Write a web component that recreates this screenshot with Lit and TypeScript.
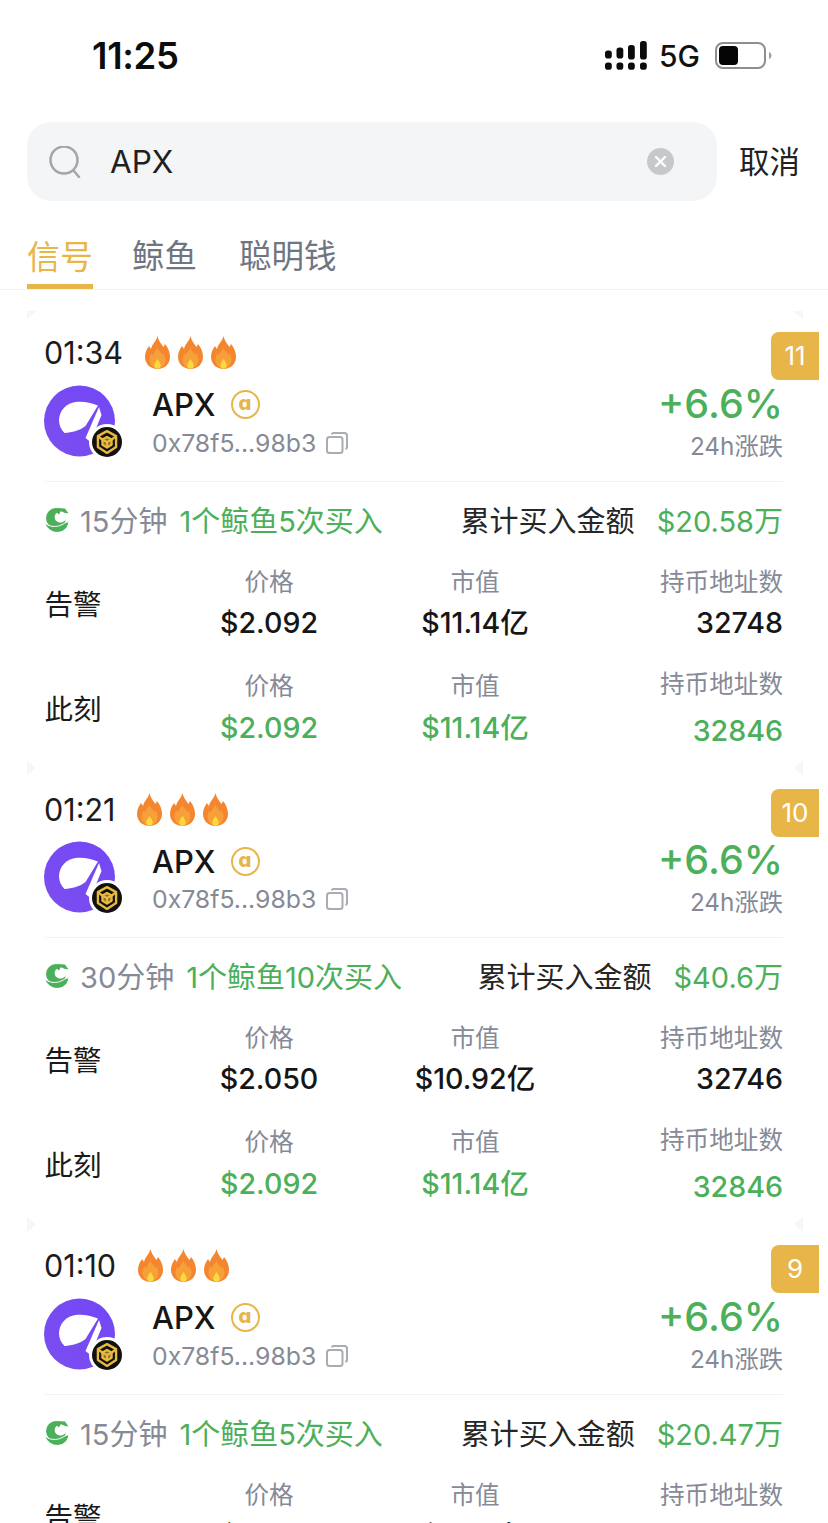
import { LitElement, html, css, svg } from "lit";
import { customElement } from "lit/decorators.js";

const flame = html`<svg class="flame" viewBox="0 0 25 33">
  <path fill="#f3862f" d="M12.5 0c1 5 3.5 7.5 6 11l1.500-3c3 3.500 5 8 5 13 0 7-5.500 12-12.500 12S0 28 0 21c0-5 2-8 4-11l2 3c1-5 5.500-8 6.500-13z"/>
  <path fill="#f7a03a" d="M12.500 12c1 3 4 5 5 7l1-1.500c1 1.500 2 4 2 6 0 5-3.500 8.500-8 8.500s-8-3.500-8-8.500c0-2.500 1-4.500 2-6l1.500 2c.5-3 3-5 4.500-7.500z"/>
  <path fill="#fbd93c" d="M12.500 23c1 1.500 3.200 4 3.200 6.500a3.200 3.200 0 0 1-6.400 0c0-2.500 2.200-5 3.200-6.500z"/>
</svg>`;

const avatar = html`<div class="avatar">
  <svg viewBox="0 0 71 72" width="71" height="72">
    <defs><linearGradient id="pg" x1="0" y1="1" x2="1" y2="0"><stop offset="0" stop-color="#7c4ff0"/><stop offset="1" stop-color="#7246f5"/></linearGradient></defs>
    <circle cx="35.500" cy="36" r="35.500" fill="url(#pg)"/>
    <path fill="#fff" d="M54 20.500C47 17.500 40 16.300 33 16.800 22 17.800 15 26 15 35.500 15 40 17 44.500 20.500 48 28 47.500 36 45.500 41.500 41z"/>
    <path fill="#fff" d="M55 22l2.500 8-11 27-5-4z"/>
  </svg>
  <div class="chain">
    <svg viewBox="0 0 33 33" width="30" height="30">
      <circle cx="16.500" cy="16.500" r="16.500" fill="#111"/>
      <g fill="none" stroke="#e8b93f" stroke-width="2.600" stroke-linejoin="round">
        <path d="M16.500 4.500l10 5.500v12l-10 6.500-10-6.500V10z"/>
        <path d="M16.500 11l5 2.800v5.700l-5 3-5-3v-5.700z" fill="#e8b93f" fill-opacity=".55"/>
        <path d="M16.500 16.500v6M11.500 14l5 2.500 5-2.500M6.500 10l5 4M26.500 10l-5 4"/>
      </g>
    </svg>
  </div>
</div>`;

const whale = html`<svg class="whale" viewBox="0 0 24 24" width="24" height="24">
  <circle cx="11" cy="10" r="10" fill="#4caf5a"/>
  <path fill="#4caf5a" d="M12 0l8 .5 3.500 5-6-1z"/>
  <path fill="#fff" d="M15.500 3.500c3.500 0 6 2.500 6 5.500 0 3.200-2.800 5.500-6 5.500-3.500 0-5.800-2.300-5.800-5.500 0-1.800 1-3.300 2.300-4.200l2 1.800z"/>
  <path fill="#4caf5a" stroke="#fff" stroke-width="1" d="M-.5 14.500c3 3.500 9.500 5 15 3.200 3.500-1.200 6.500-3.700 9.500-4.200-.5 4.500-3 8-6.500 9.800-3.500 1.500-7.500 1.500-10.500 0-3.500-1.800-6.500-5-7.500-8.800z"/>
</svg>`;

const copy = html`<svg class="copy" viewBox="0 0 22 22" width="22" height="22" fill="none" stroke="#a9acb3" stroke-width="2">
  <rect x="1" y="5" width="15.500" height="16" rx="2.500"/>
  <path d="M6 2.500C6 1.500 6.800 1 7.500 1H18.500C20 1 21 2 21 3.500V15c0 1-.7 1.800-1.700 1.800"/>
</svg>`;

interface Row { price: string; cap: string; holders: string; }
interface Card {
  time: string; badge: string; mins: string; whales: string; total: string;
  alert: Row; now: Row;
}
const now: Row = { price: "$2.092", cap: "$11.14亿", holders: "32846" };
const cards: Card[] = [
  { time: "01:34", badge: "11", mins: "15分钟", whales: "1个鲸鱼5次买入", total: "$20.58万", alert: { price: "$2.092", cap: "$11.14亿", holders: "32748" }, now },
  { time: "01:21", badge: "10", mins: "30分钟", whales: "1个鲸鱼10次买入", total: "$40.6万", alert: { price: "$2.050", cap: "$10.92亿", holders: "32746" }, now },
  { time: "01:10", badge: "9", mins: "15分钟", whales: "1个鲸鱼5次买入", total: "$20.47万", alert: { price: "$2.092", cap: "$11.14亿", holders: "32748" }, now },
];

@customElement("app-root")
export class AppRoot extends LitElement {
  static styles = css`
    :host {
      display: block; width: 828px; height: 1523px; overflow: hidden; background: #fff;
      font-family: "Inter", "Noto Sans CJK SC", sans-serif; color: #1a1a1a;
    }
    .status { height: 122px; display: flex; align-items: flex-start; justify-content: space-between; box-sizing: border-box; padding: 34px 56px 0 92px; }
    .clock { font-size: 36.500px; font-weight: 600; line-height: 44px; color: #0c0c0c; letter-spacing: -.3px; }
    .status-right { display: flex; align-items: center; height: 44px; margin-top: -1px; }
    .signal { display: block; margin-top: 1px; }
    .net { font-size: 30px; font-weight: 500; margin: 1px 15px 0 12px; line-height: 44px; color: #111; }
    .searchrow { display: flex; align-items: center; padding-left: 27px; }
    .search { width: 690px; height: 79px; border-radius: 24px; background: #f3f5f7; display: flex; align-items: center; box-sizing: border-box; padding: 0 43px 0 22px; }
    .q { font-size: 31.500px; margin-left: 29px; flex: 1; color: #1f1f1f; }
    .cancel { font-size: 30.500px; margin: -4px 0 0 22px; color: #222; }
    .tabs { margin-top: 32px; height: 56px; display: flex; padding-left: 27px; gap: 40px; border-bottom: 1px solid #f1f2f3; box-sizing: content-box; }
    .tab { font-size: 32.500px; line-height: 48px; color: #6f7581; height: 56px; box-sizing: border-box; }
    .tab.on { font-size: 33px; color: #e8b548; border-bottom: 5px solid #e8b548; margin-right: -1px; }
    .tab:last-child { margin-left: 2px; }
    .list { margin-top: 21px; overflow: hidden; padding-top: .5px; }
    .card { position: relative; height: 456.500px; box-sizing: border-box; padding: 21px 45px 0; }
    .mark { position: absolute; top: -8px; width: 9px; height: 16px; background: #f6f7f8; }
    .mark.l { left: 27px; clip-path: polygon(0 0, 100% 50%, 0 100%); }
    .mark.r { left: 794px; clip-path: polygon(100% 0, 0 50%, 100% 100%); }
    .rank { position: absolute; top: 20.500px; right: 9px; min-width: 48px; height: 48px; background: #e8b548; color: #fff; border-radius: 8px 0 0 8px; font-size: 26px; line-height: 48px; text-align: center; }
    .timerow { display: flex; align-items: center; height: 40px; }
    .time { font-size: 30.500px; color: #1c1c1c; margin-right: 22px; margin-left: -1px; }
    .flames { display: flex; gap: 8px; }
    .flame { width: 25px; height: 33px; display: block; }
    .head { display: flex; margin-top: 12px; height: 72px; }
    .avatar { position: relative; width: 71px; height: 72px; margin-left: -1px; flex: none; }
    .avatar > svg { display: block; }
    .chain { position: absolute; left: 48px; top: 42px; width: 30px; height: 30px; border-radius: 50%; background: #fff; box-shadow: 0 0 0 3px #fff; }
    .chain svg { display: block; }
    .info { margin-left: 37px; flex: 1; }
    .name { display: flex; align-items: center; height: 40px; font-size: 31px; font-weight: 500; color: #161616; }
    .at { width: 29px; height: 29px; box-sizing: border-box; border: 2.500px solid #e8b548; border-radius: 50%; margin-left: 15px; color: #e8b548; font-family: "DejaVu Sans", sans-serif; font-size: 19px; line-height: 22px; font-weight: 700; text-align: center; }
    .addr { display: flex; align-items: center; height: 36px; font-size: 24.800px; color: #868a96; }
    .copy { margin-left: 10px; }
    .chg { text-align: right; }
    .pct { font-size: 39.500px; font-weight: 500; color: #4caf5a; line-height: 40px; margin-top: -1px; }
    .chg-l { font-size: 24.300px; color: #868a96; line-height: 36px; margin-top: 4px; }
    .div { height: 1px; background: #f1f2f3; margin-top: 24px; }
    .whalerow { display: flex; align-items: center; height: 40px; margin-top: 17px; font-size: 29px; }
    .whale { flex: none; margin: 2px 11px 0 0; }
    .mins { color: #868a96; margin-right: 12px; }
    .gr { color: #4caf5a; }
    .sp { flex: 1; }
    .tot { color: #262626; margin-right: 22px; }
    .stats { display: grid; grid-template-columns: 120px 208px 204px 206px; grid-auto-rows: 104px; margin-top: 28px; }
    .rowlabel { font-size: 28.500px; line-height: 40px; height: 74px; display: flex; align-items: center; box-sizing: border-box; padding-top: 2px; margin-left: -.5px; }
    .rowlabel.live { padding-top: 4px; }
    .cell { display: flex; flex-direction: column; align-items: center; height: 74px; }
    .cell.end { align-items: flex-end; }
    .k { font-size: 24.600px; line-height: 30px; color: #868a96; }
    .v { font-size: 28.600px; font-weight: 500; line-height: 36px; margin-top: 8px; color: #161616; }
    .v.live { color: #4caf5a; margin-top: 9px; }
    .cell.drift { margin-top: -2px; }
    .cell.drift .v { margin-top: 14px; }
  `;

  private stat(label: string, r: Row, live: boolean) {
    return html`
      <div class="rowlabel ${live ? "live" : ""}">${label}</div>
      <div class="cell"><div class="k">价格</div><div class="v ${live ? "live" : ""}">${r.price}</div></div>
      <div class="cell"><div class="k">市值</div><div class="v ${live ? "live" : ""}">${r.cap}</div></div>
      <div class="cell end ${live ? "drift" : ""}"><div class="k">持币地址数</div><div class="v ${live ? "live" : ""}">${r.holders}</div></div>`;
  }

  render() {
    return html`
      <div class="status">
        <div class="clock">11:25</div>
        <div class="status-right">
          <svg class="signal" width="42" height="30" viewBox="0 0 42 30" fill="#0c0c0c">
            ${svg`<rect x="0" y="9.500" width="6.800" height="8" rx="2.800"/><rect x="11.500" y="6.500" width="6.800" height="11" rx="2.800"/><rect x="23" y="4" width="6.800" height="14.500" rx="2.800"/><rect x="35" y="0" width="6.800" height="18.500" rx="2.800"/>
            <rect x="0" y="21.500" width="6.800" height="7.200" rx="2.800"/><rect x="11.500" y="21.500" width="6.800" height="7.200" rx="2.800"/><rect x="23" y="21.500" width="6.800" height="7.200" rx="2.800"/><rect x="35" y="21.500" width="6.800" height="7.200" rx="2.800"/>`}
          </svg>
          <div class="net">5G</div>
          <svg width="57" height="27" viewBox="0 0 57 27">
            <rect x="1" y="1" width="49" height="25" rx="7" fill="none" stroke="#8e8e8e" stroke-width="2"/>
            <rect x="4" y="4" width="19" height="19" rx="4" fill="#050505"/>
            <path d="M54 10c1.500.5 2.500 2 2.500 3.500S55.500 16.500 54 17z" fill="#a0a0a0"/>
          </svg>
        </div>
      </div>
      <div class="searchrow">
        <div class="search">
          <svg width="32" height="32" viewBox="0 0 32 32" fill="none" stroke="#a3a7ab" stroke-width="2.500" stroke-linecap="round"><circle cx="15" cy="14" r="13.500"/><path d="M25 25l5 6"/></svg>
          <div class="q">APX</div>
          <svg width="27" height="27" viewBox="0 0 27 27"><circle cx="13.500" cy="13.500" r="13.500" fill="#c6c8ca"/><path d="M9 9l9 9M18 9l-9 9" stroke="#fff" stroke-width="2.400" stroke-linecap="round"/></svg>
        </div>
        <div class="cancel">取消</div>
      </div>
      <div class="tabs">
        <div class="tab on">信号</div>
        <div class="tab">鲸鱼</div>
        <div class="tab">聪明钱</div>
      </div>
      <div class="list">
        ${cards.map((c) => html`
          <div class="card">
            <i class="mark l"></i><i class="mark r"></i>
            <div class="rank">${c.badge}</div>
            <div class="timerow">
              <div class="time">${c.time}</div>
              <div class="flames">${flame}${flame}${flame}</div>
            </div>
            <div class="head">
              ${avatar}
              <div class="info">
                <div class="name">APX<span class="at">ɑ</span></div>
                <div class="addr">0x78f5...98b3${copy}</div>
              </div>
              <div class="chg">
                <div class="pct">+6.6%</div>
                <div class="chg-l">24h涨跌</div>
              </div>
            </div>
            <div class="div"></div>
            <div class="whalerow">
              ${whale}
              <span class="mins">${c.mins}</span>
              <span class="gr">${c.whales}</span>
              <span class="sp"></span>
              <span class="tot">累计买入金额</span>
              <span class="gr">${c.total}</span>
            </div>
            <div class="stats">
              ${this.stat("告警", c.alert, false)}
              ${this.stat("此刻", c.now, true)}
            </div>
          </div>`)}
      </div>
    `;
  }
}
